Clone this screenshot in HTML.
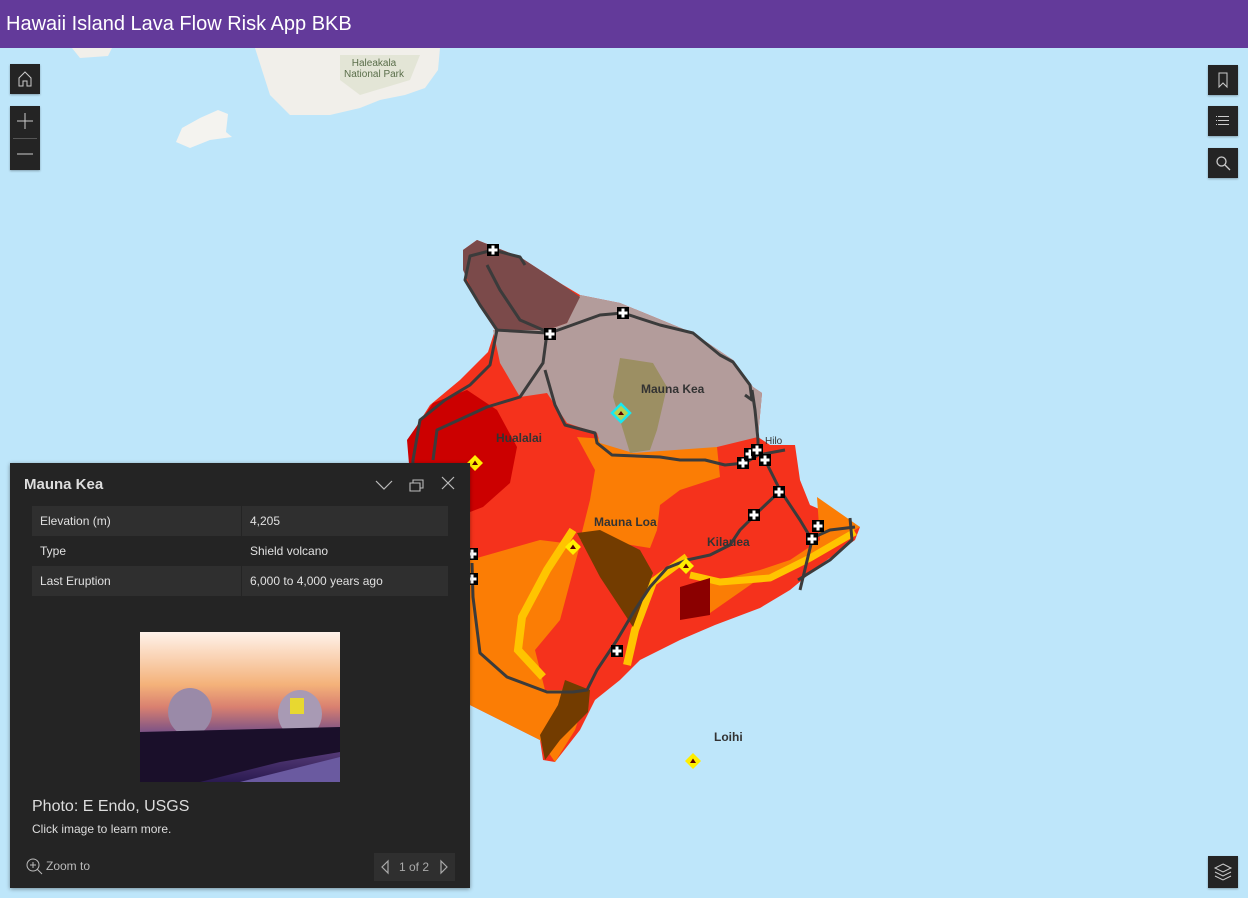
<!DOCTYPE html>
<html><head><meta charset="utf-8">
<style>
*{margin:0;padding:0;box-sizing:border-box}
body{width:1248px;height:898px;overflow:hidden;background:#bee6fa;font-family:"Liberation Sans",sans-serif;position:relative}
#hdr{position:absolute;left:0;top:0;width:1248px;height:48px;background:#633a9a;color:#fff;font-size:20px;line-height:48px;padding-left:6px}
.btn{position:absolute;width:30px;height:30px;background:#242424;box-shadow:0 1px 2px rgba(0,0,0,.3)}
.btn svg{position:absolute;left:0;top:0}
#panel{position:absolute;left:10px;top:463px;width:460px;height:425px;background:#242424;box-shadow:0 1px 4px rgba(0,0,0,.4);color:#e0e0e0}
.row{position:absolute;left:22px;width:416px;height:30px;font-size:12px;line-height:30px}
.row span{position:absolute;top:0}
.lbl{position:absolute;font-weight:bold;font-size:12px;color:#333}
</style></head><body>
<svg width="1248" height="898" style="position:absolute;left:0;top:0">
<defs><linearGradient id="sky" x1="0" y1="0" x2="0" y2="1"><stop offset="0" stop-color="#fff2ea"/><stop offset=".35" stop-color="#f4b27a"/><stop offset=".5" stop-color="#d98070"/><stop offset=".7" stop-color="#6a4a8a"/><stop offset="1" stop-color="#2a1a50"/></linearGradient></defs>
<path d="M255,48 L440,48 L438,70 L425,88 L405,95 L380,100 L360,108 L330,115 L290,115 L270,95 L262,70 Z" fill="#f1efea"/>
<path d="M340,55 L420,55 L410,80 L360,95 L340,80Z" fill="#e3e5d6"/>
<path d="M72,48 L112,48 L108,56 L80,58Z" fill="#f1efea"/>
<path d="M182,128 L200,118 L218,110 L228,114 L226,132 L232,137 L210,140 L190,148 L176,142Z" fill="#f4f3ef"/>
<text x="374" y="66" font-size="10" fill="#5a6e4a" text-anchor="middle" font-family="Liberation Sans">Haleakala</text>
<text x="374" y="77" font-size="10" fill="#5a6e4a" text-anchor="middle" font-family="Liberation Sans">National Park</text>
<path d="M465,280 L463,250 L477,240 L520,257 L560,283 L580,295 L620,303 L693,333 L733,360 L753,387 L762,393 L758,437 L770,445 L795,445 L800,480 L810,505 L860,527 L855,540 L820,565 L790,590 L760,608 L715,625 L680,640 L640,660 L620,680 L595,700 L580,730 L555,762 L543,760 L540,740 L520,730 L470,705 L450,600 L410,470 L408,440 L430,405 L460,380 L488,352 L495,330 L480,307Z" fill="#f5321c"/>
<path d="M577,437 L717,447 L720,477 L680,490 L660,505 L657,530 L650,548 L600,540 L580,540 L590,500 L595,470Z" fill="#fb7d05"/>
<path d="M470,560 L540,540 L580,545 L560,620 L535,650 L545,690 L575,690 L585,700 L575,730 L555,762 L540,740 L470,705Z" fill="#fb7d05"/>
<path d="M817,497 L860,527 L800,563 L753,583 L710,613 L680,617 L690,590 L720,580 L760,570 L790,560 L820,540Z" fill="#fb7d05"/>
<path d="M407,440 L433,403 L467,390 L497,410 L517,447 L510,483 L483,507 L470,512 L450,520 L412,500Z" fill="#cc0000"/>
<path d="M580,295 L620,303 L693,333 L733,360 L753,387 L762,393 L758,437 L717,447 L633,453 L600,443 L597,433 L567,423 L547,393 L520,397 L500,363 L493,330 L547,330 L567,323Z" fill="#b39c9b"/>
<path d="M463,250 L477,240 L520,257 L560,283 L580,297 L567,323 L547,330 L497,330 L480,307 L463,270Z" fill="#7b4a4a"/>
<path d="M620,358 L653,363 L667,387 L657,430 L650,450 L630,453 L613,397Z" fill="#9c8f63"/>
<polyline points="573,530 547,570 522,617 518,650 543,677" fill="none" stroke="#ffc400" stroke-width="8"/>
<polyline points="687,557 653,582 635,630 627,665" fill="none" stroke="#ffc400" stroke-width="8"/>
<polyline points="690,575 720,582 770,578 810,558 855,532" fill="none" stroke="#ffc400" stroke-width="7"/>
<path d="M577,533 L600,530 L640,550 L653,573 L633,627 L600,577Z" fill="#733c00"/>
<path d="M565,680 L590,690 L588,712 L560,740 L545,760 L540,735 L558,705Z" fill="#733c00"/>
<path d="M680,587 L710,578 L710,615 L680,620Z" fill="#8b0000"/>
<g fill="none" stroke="#3b3b3b" stroke-width="3" stroke-linejoin="round">
<polyline points="493,250 470,256 465,280 480,305 497,330 490,365 470,385 445,400 420,420 413,460 410,520"/>
<polyline points="493,250 520,257 525,265"/>
<polyline points="487,265 500,290 520,320 550,333 600,315 623,313 660,325 693,333 720,355 733,362 750,385 752,400 745,395"/>
<polyline points="752,390 755,410 758,440 758,452"/>
<polyline points="495,330 547,333"/>
<polyline points="547,333 543,363 520,397 487,407 437,430 433,460"/>
<polyline points="545,370 555,405 565,425 595,433 597,443 612,455 660,457 680,460 705,460 725,465 745,463 758,455 785,450"/>
<polyline points="765,460 780,490 800,520 812,540 800,590"/>
<polyline points="779,492 760,510 740,530 730,545 710,555 687,560 667,568 650,587 633,613 617,640 597,670 587,690 573,692 547,692 507,677 480,653 473,597 472,563"/>
<polyline points="812,538 830,530 855,527"/>
<polyline points="850,518 852,540 830,560 798,580"/>
</g>
<g id="h"><rect x="-6" y="-6" width="12" height="12" fill="#000"/><path d="M-1.5,-4.5h3v3h3v3h-3v3h-3v-3h-3v-3h3z" fill="#fff"/></g>
<use href="#h" x="623" y="313"/><use href="#h" x="550" y="334"/><use href="#h" x="743" y="463"/><use href="#h" x="750" y="454"/><use href="#h" x="757" y="450"/><use href="#h" x="765" y="460"/><use href="#h" x="779" y="492"/><use href="#h" x="754" y="515"/><use href="#h" x="818" y="526"/><use href="#h" x="812" y="539"/><use href="#h" x="617" y="651"/><use href="#h" x="472" y="554"/><use href="#h" x="472" y="579"/>
<use href="#h" x="493" y="250"/>
<g id="v"><path d="M0,-8 L8,0 L0,8 L-8,0Z" fill="#ffee00"/><path d="M-3,2 L0,-2.5 L3,2Z" fill="#5a0000"/></g>
<use href="#v" x="573" y="547"/><use href="#v" x="686" y="566"/><use href="#v" x="693" y="761"/><use href="#v" x="475" y="463"/>
<path d="M621,404 L630,413 L621,422 L612,413Z" fill="#b8d050" stroke="#17e8f0" stroke-width="2.5"/><path d="M618,415 L621,411 L624,415Z" fill="#5a0000"/>
</svg>
<div class="lbl" style="left:641px;top:382px">Mauna Kea</div>
<div class="lbl" style="left:496px;top:431px">Hualalai</div>
<div class="lbl" style="left:594px;top:515px">Mauna Loa</div>
<div class="lbl" style="left:707px;top:535px">Kilauea</div>
<div class="lbl" style="left:714px;top:730px">Loihi</div>
<div class="lbl" style="left:765px;top:436px;font-weight:normal;font-size:10px">Hilo</div>
<div id="hdr">Hawaii Island Lava Flow Risk App BKB</div>
<div class="btn" style="left:10px;top:64px"><svg width="30" height="30"><path d="M9,22V14L15,8L21,14V22H17V17H13V22Z" fill="none" stroke="#ccc" stroke-width="1"/></svg></div>
<div class="btn" style="left:10px;top:106px;height:64px"><svg width="30" height="64"><path d="M7,15H23M15,7V23" stroke="#ccc"/><path d="M3,32.5H27" stroke="#555"/><path d="M7,48H23" stroke="#ccc"/></svg></div>
<div class="btn" style="left:1208px;top:65px"><svg width="30" height="30"><path d="M11,8H19V22L15,18L11,22Z" fill="none" stroke="#ccc"/></svg></div>
<div class="btn" style="left:1208px;top:106px"><svg width="30" height="30"><path d="M10,10.5H21M10,14.5H21M10,18.5H21M8,10.5H9M8,14.5H9M8,18.5H9" stroke="#ccc"/></svg></div>
<div class="btn" style="left:1208px;top:148px"><svg width="30" height="30"><circle cx="13.5" cy="13.5" r="4.5" fill="none" stroke="#ccc" stroke-width="1.3"/><path d="M17,17L22,22" stroke="#ccc" stroke-width="1.3"/></svg></div>
<div class="btn" style="left:1208px;top:856px;height:32px"><svg width="30" height="32"><path d="M15,8L23,12L15,16L7,12Z M7,16L15,20L23,16 M7,20L15,24L23,20" fill="none" stroke="#ccc"/></svg></div>
<div id="panel">
<div style="position:absolute;left:14px;top:13px;font-size:15px;font-weight:bold;color:#ddd">Mauna Kea</div>
<svg width="460" height="40" style="position:absolute;left:0;top:0"><path d="M366,18L374,26L382,18" fill="none" stroke="#bbb" stroke-width="1.2"/><path d="M400,20h10v8h-10zM403,20v-3h10v8h-3" fill="none" stroke="#bbb" stroke-width="1.1"/><path d="M432,14L444,26M444,14L432,26" stroke="#bbb" stroke-width="1.2"/></svg>
<div class="row" style="top:43px;background:#2f2f2f"><span style="left:8px">Elevation (m)</span><span style="left:218px">4,205</span></div>
<div class="row" style="top:73px"><span style="left:8px">Type</span><span style="left:218px">Shield volcano</span></div>
<div class="row" style="top:103px;background:#2f2f2f"><span style="left:8px">Last Eruption</span><span style="left:218px">6,000 to 4,000 years ago</span></div>
<div style="position:absolute;left:231px;top:43px;width:1px;height:90px;background:#242424"></div>
<svg width="200" height="150" style="position:absolute;left:130px;top:169px"><rect width="200" height="150" fill="url(#sky)"/><ellipse cx="50" cy="80" rx="22" ry="24" fill="#9a8aa8"/><ellipse cx="160" cy="82" rx="22" ry="24" fill="#a89ab4"/><rect x="150" y="66" width="14" height="16" fill="#e8d830"/><path d="M0,100 L200,95 L200,120 L140,130 L60,150 L0,150Z" fill="#1a0f2a"/><path d="M100,150L200,125V150Z" fill="#6a5aa0"/></svg>
<div style="position:absolute;left:22px;top:335px;font-size:16px;color:#ddd">Photo: E Endo, USGS</div>
<div style="position:absolute;left:22px;top:359px;font-size:12px;color:#ddd">Click image to learn more.</div>
<svg width="20" height="20" style="position:absolute;left:15px;top:394px"><circle cx="8" cy="8" r="6" fill="none" stroke="#bbb"/><path d="M5,8H11M8,5V11M12.5,12.5L17,17" stroke="#bbb"/></svg>
<div style="position:absolute;left:36px;top:396px;font-size:12px;color:#bbb">Zoom to</div>
<div style="position:absolute;left:364px;top:390px;width:81px;height:28px;background:#2f2f2f;font-size:12px;color:#aaa;line-height:28px;padding-left:25px">1 of 2</div>
<svg width="81" height="28" style="position:absolute;left:364px;top:390px"><path d="M14,8L8,14L14,20Z M67,8L73,14L67,20Z" fill="none" stroke="#aaa" stroke-width="1.2"/></svg>
</div>
</body></html>
